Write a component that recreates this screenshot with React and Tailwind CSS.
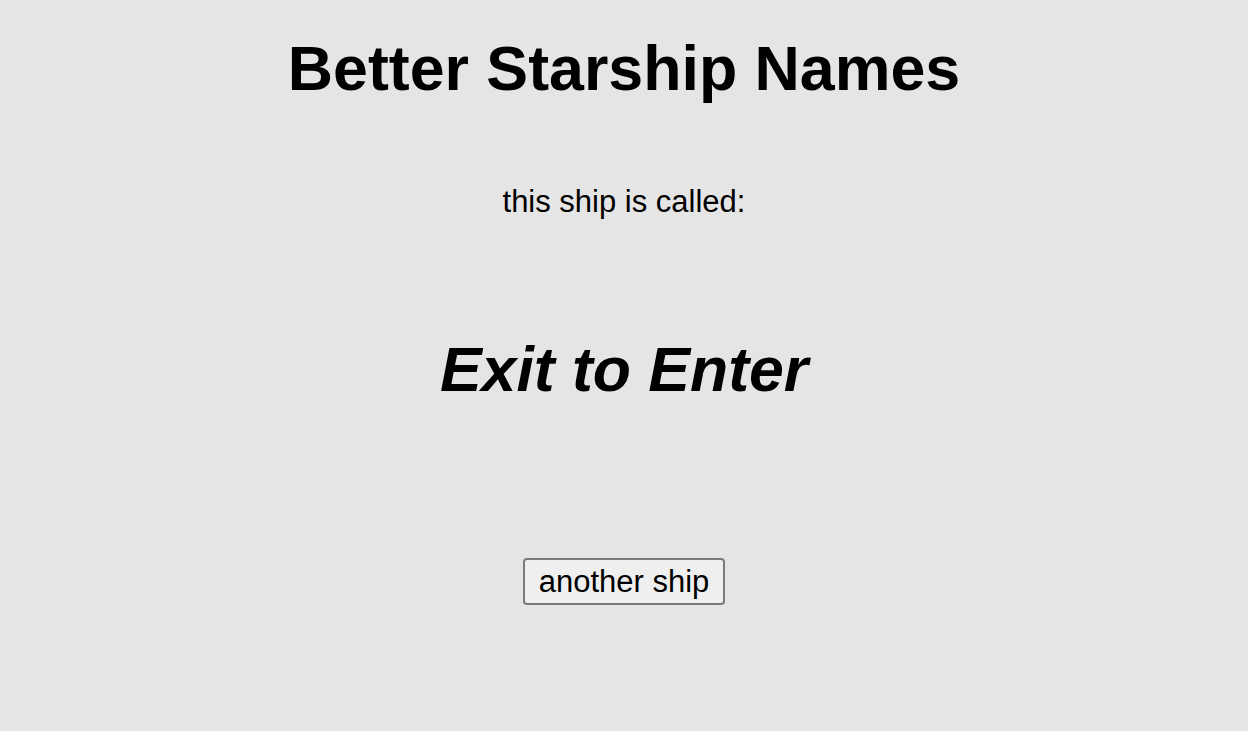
import React, { useState } from "react";

const names = ["Exit to Enter", "Just Read the Instructions", "Of Course I Still Love You"];

const App = () => {
  const [idx, setIdx] = useState(0);

  return (
    <div className="min-h-screen w-full bg-[#e5e5e5] text-black font-['Liberation_Sans',Arial,sans-serif] flex flex-col items-center pt-[37px]">
      <h1 className="text-[62.7px] leading-[62px] font-bold">Better Starship Names</h1>

      <p className="mt-[87px] text-[31px] leading-[31px]">this ship is called:</p>

      <h2 className="mt-[121px] text-[62.5px] leading-[62px] font-bold italic">{names[idx]}</h2>

      <button
        onClick={() => setIdx((idx + 1) % names.length)}
        className="mt-[158px] h-[47px] px-[14px] text-[31px] leading-none bg-[#efefef] border-2 border-[#7a7a7a] rounded-[4px]"
      >
        another ship
      </button>
    </div>
  );
};

export default App;
